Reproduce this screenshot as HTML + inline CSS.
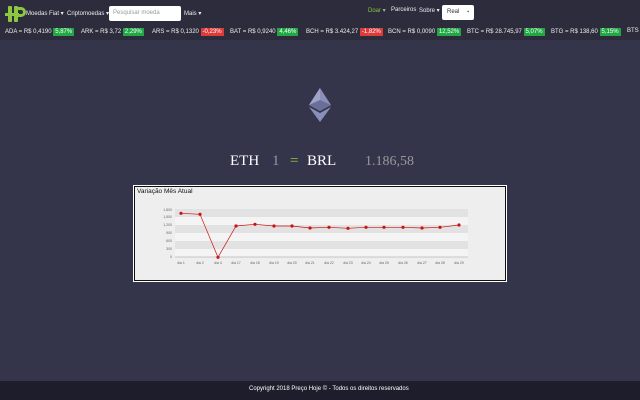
<!DOCTYPE html>
<html><head><meta charset="utf-8"><style>
*{margin:0;padding:0;box-sizing:border-box}
body{width:640px;height:400px;background:#34344b;font-family:"Liberation Sans",sans-serif;position:relative;overflow:hidden;color:#fff}
.nav{position:absolute;left:0;top:0;width:640px;height:25px;background:#2c2c3d}
.t{position:absolute;font-size:6px;white-space:nowrap;color:#eee}
.tick{position:absolute;top:25px;left:0;width:640px;height:15px;background:#2c2c3d}
.b{display:inline-block;padding:1px 2px;color:#fff;font-size:6px}
.g{background:#22a745}.r{background:#dc3b3b}
.foot{position:absolute;left:0;top:381px;width:640px;height:19px;background:#1d1d2b}
</style></head><body>
<div class="nav"></div>
<div class="tick"></div>
<svg style="position:absolute;left:5px;top:4px" width="21" height="20" viewBox="0 0 21 20">
<g fill="#8dc63f"><rect x="3" y="2" width="4" height="16" rx="1"/><rect x="9" y="2" width="4" height="16" rx="1"/><rect x="0" y="9" width="14" height="3"/><path d="M13 3h3a5 5 0 0 1 0 10h-3v-3h3a2 2 0 0 0 0-4h-3z"/></g></svg>
<div class="t" style="left:26px;top:10px">Moedas Fiat ▾</div>
<div class="t" style="left:67px;top:10px">Criptomoedas ▾</div>
<div style="position:absolute;left:109px;top:6px;width:72px;height:15px;background:#fff;border-radius:2px;font-size:6px;color:#999;padding:4px 4px">Pesquisar moeda</div>
<div class="t" style="left:184px;top:10px">Mais ▾</div>
<div class="t" style="left:368px;top:7px;color:#8dc63f">Doar <span style="color:#aaa">▾</span></div>
<div class="t" style="left:391px;top:7px">Parceiros</div>
<div class="t" style="left:419px;top:7px">Sobre ▾</div>
<div style="position:absolute;left:442px;top:5px;width:32px;height:15px;background:#fff;border-radius:2px;font-size:6px;color:#333;padding:4px 5px">Real <span style="float:right;font-size:5px">▪</span></div>
<div class="t" style="left:5px;top:28px">ADA = R$ 0,4190 <span class="b g">5,87%</span></div>
<div class="t" style="left:81px;top:28px">ARK = R$ 3,72 <span class="b g">2,29%</span></div>
<div class="t" style="left:152px;top:28px">ARS = R$ 0,1320 <span class="b r">-0,23%</span></div>
<div class="t" style="left:230px;top:28px">BAT = R$ 0,9240 <span class="b g">4,46%</span></div>
<div class="t" style="left:306px;top:28px">BCH = R$ 3.424,27 <span class="b r">-1,82%</span></div>
<div class="t" style="left:388px;top:28px">BCN = R$ 0,0090 <span class="b g">12,52%</span></div>
<div class="t" style="left:467px;top:28px">BTC = R$ 28.745,97 <span class="b g">5,07%</span></div>
<div class="t" style="left:551px;top:28px">BTG = R$ 138,60 <span class="b g">5,15%</span></div>
<div class="t" style="left:627px;top:28px">BTS</div>
<svg style="position:absolute;left:309px;top:88px" width="22" height="34" viewBox="0 0 22 34">
<path d="M11 0L0 17l11 6 11-6z" fill="#8a8fb8"/><path d="M11 0L0 17l11-5z" fill="#9ea3c9"/><path d="M11 12L0 17l11 6 11-6z" fill="#6a6f9a"/><path d="M0 19l11 15 11-15-11 6z" fill="#8a8fb8"/></svg>
<div style="position:absolute;top:153px;left:230px;font-family:'Liberation Serif',serif;font-size:15px;white-space:nowrap">ETH<span style="color:#999;position:absolute;left:42px">1</span><span style="color:#8dc63f;position:absolute;left:60px">=</span><span style="position:absolute;left:77px">BRL</span><span style="color:#999;position:absolute;left:135px;font-size:14px;top:1px">1.186,58</span></div>
<div style="position:absolute;left:134px;top:186px;width:372px;height:95px;background:#eee;border:1px solid #111;box-shadow:0 0 0 1px #fff"></div>
<div style="position:absolute;left:137px;top:188px;font-size:6.5px;color:#111">Variação Mês Atual</div>
<svg style="position:absolute;left:0;top:0" width="640" height="400">
<g fill="#e2e2e2"><rect x="175" y="209" width="293" height="8"/><rect x="175" y="225" width="293" height="8"/><rect x="175" y="241" width="293" height="8"/></g>
<g fill="#f4f4f4"><rect x="175" y="217" width="293" height="8"/><rect x="175" y="233" width="293" height="8"/><rect x="175" y="249" width="293" height="8"/></g>
<line x1="175" y1="257" x2="468" y2="257" stroke="#999" stroke-width=".5"/>
<g font-size="3.5" fill="#666" text-anchor="end"><text x="172" y="211">1,800</text><text x="172" y="218">1,500</text><text x="172" y="226">1,200</text><text x="172" y="234">900</text><text x="172" y="242">600</text><text x="172" y="250">300</text><text x="172" y="258">0</text></g>
<g font-size="3.5" fill="#666" text-anchor="middle"><text x="181" y="264">dia 1</text><text x="200" y="264">dia 2</text><text x="218" y="264">dia 4</text><text x="236" y="264">dia 17</text><text x="255" y="264">dia 18</text><text x="274" y="264">dia 19</text><text x="292" y="264">dia 20</text><text x="310" y="264">dia 21</text><text x="329" y="264">dia 22</text><text x="348" y="264">dia 23</text><text x="366" y="264">dia 24</text><text x="384" y="264">dia 25</text><text x="403" y="264">dia 26</text><text x="422" y="264">dia 27</text><text x="440" y="264">dia 28</text><text x="459" y="264">dia 29</text></g>
<polyline fill="none" stroke="#cc1111" stroke-width=".7" points="181,213.3 200,214.3 218,257.3 236,226 255,224.3 274,226 292,226 310,228 329,227.3 348,228.3 366,227.3 384,227.3 403,227.3 422,228 440,227.3 459,225"/>
<g fill="#cc1111"><circle cx="181" cy="213.3" r="1.6"/><circle cx="200" cy="214.3" r="1.6"/><circle cx="218" cy="257.3" r="1.6"/><circle cx="236" cy="226" r="1.6"/><circle cx="255" cy="224.3" r="1.6"/><circle cx="274" cy="226" r="1.6"/><circle cx="292" cy="226" r="1.6"/><circle cx="310" cy="228" r="1.6"/><circle cx="329" cy="227.3" r="1.6"/><circle cx="348" cy="228.3" r="1.6"/><circle cx="366" cy="227.3" r="1.6"/><circle cx="384" cy="227.3" r="1.6"/><circle cx="403" cy="227.3" r="1.6"/><circle cx="422" cy="228" r="1.6"/><circle cx="440" cy="227.3" r="1.6"/><circle cx="459" cy="225" r="1.6"/></g>
</svg>
<div class="foot"></div>
<div class="t" style="left:249px;top:386px;color:#fff">Copyright 2018 Preço Hoje © - Todos os direitos reservados</div>
</body></html>
